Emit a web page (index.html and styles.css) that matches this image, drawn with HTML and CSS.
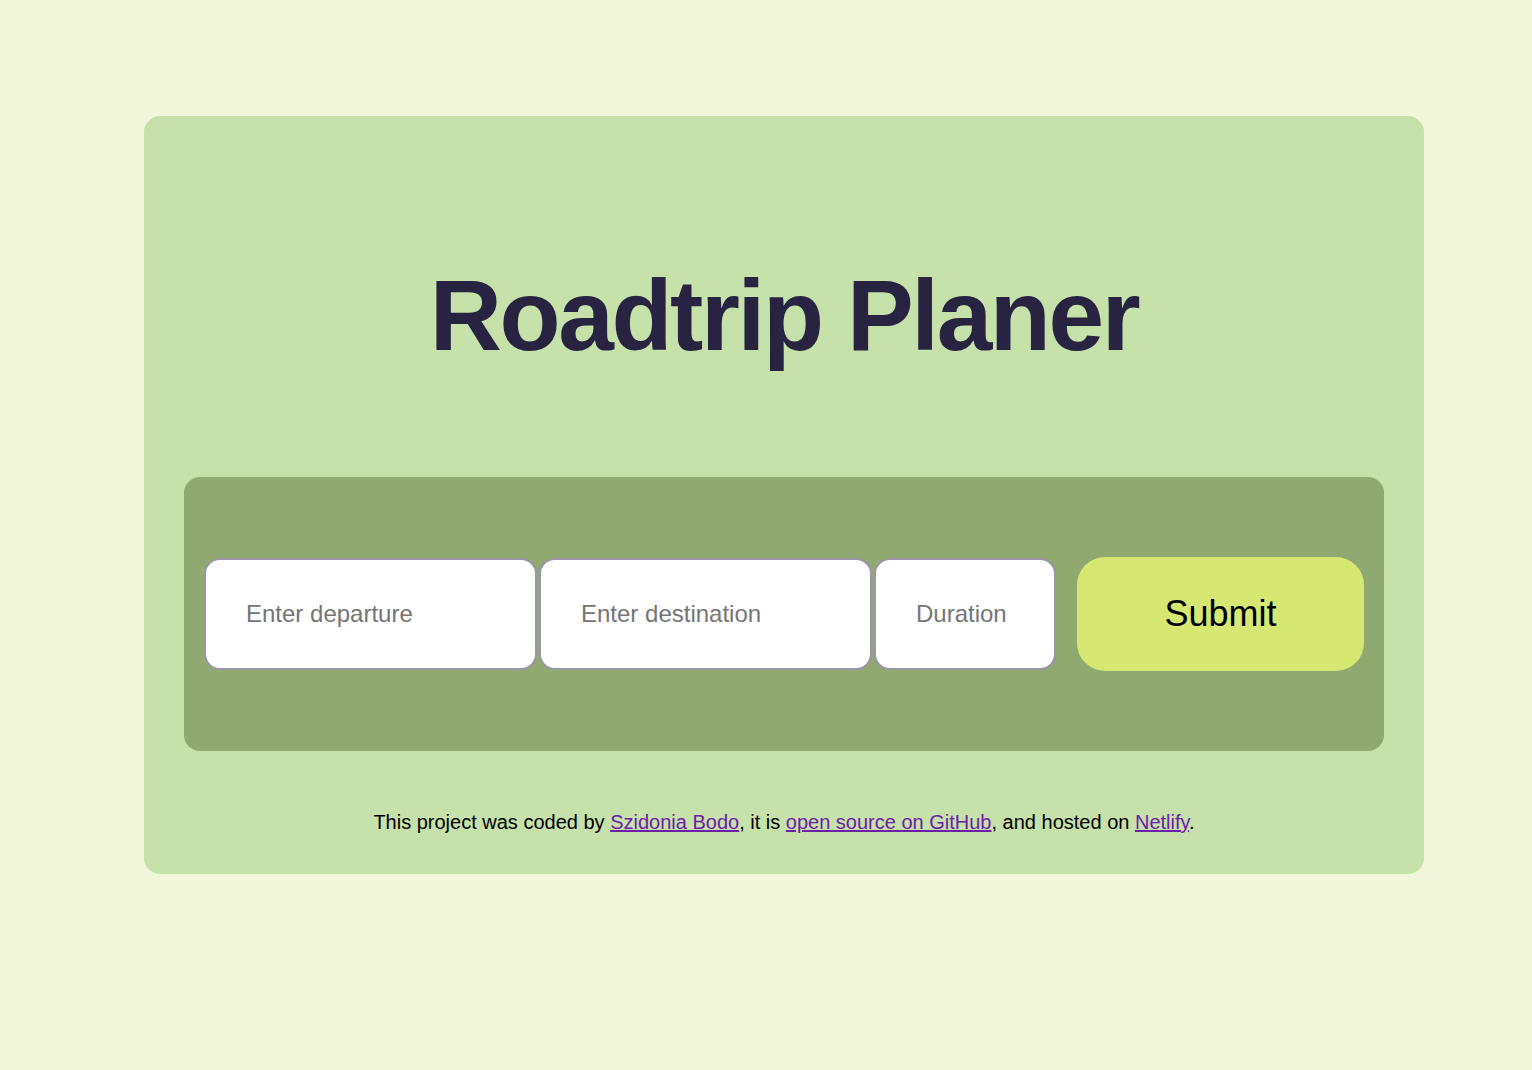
FILE: index.html
```html
<!DOCTYPE html>
<html lang="en">
<head>
<meta charset="utf-8">
<title>Roadtrip Planer</title>
<link rel="stylesheet" href="styles.css">
</head>
<body>
<main class="card">
  <h1 class="title">Roadtrip Planer</h1>
  <form class="panel">
    <input class="field field-wide" type="text" placeholder="Enter departure">
    <input class="field field-wide" type="text" placeholder="Enter destination">
    <input class="field field-short" type="text" placeholder="Duration">
    <button class="submit" type="button">Submit</button>
  </form>
  <footer class="footer">This project was coded by <a href="#">Szidonia Bodo</a>, it is <a href="#">open source on GitHub</a>, and hosted on <a href="#">Netlify</a>.</footer>
</main>
</body>
</html>
```
FILE: styles.css
```css
html, body {
  margin: 0;
  padding: 0;
}
body {
  background: #f1f5d9;
  font-family: "Liberation Sans", Arial, sans-serif;
}
.card {
  width: 1280px;
  box-sizing: border-box;
  margin: 116px 0 0 144px;
  padding: 40px;
  background: #c6e1aa;
  border-radius: 16px;
}
.title {
  margin: 99px 0 102px;
  font-size: 100px;
  line-height: 120px;
  font-weight: 700;
  letter-spacing: -2.4px;
  text-align: center;
  color: #272340;
}
.panel {
  display: flex;
  align-items: center;
  gap: 2px;
  padding: 80px 20px 80px;
  background: #8fa970;
  border-radius: 16px;
}
.field {
  box-sizing: border-box;
  flex: none;
  height: 112px;
  margin: 0;
  padding: 0 0 0 40px;
  border: 2px solid #9a96a8;
  border-radius: 16px;
  background: #fff;
  font-family: "Liberation Sans", Arial, sans-serif;
  font-size: 24px;
  color: #222;
  outline: none;
}
.field::placeholder {
  color: #757575;
}
.field-wide {
  width: 333px;
}
.field-short {
  width: 182px;
}
.submit {
  flex: none;
  margin: 0 0 0 19px;
  width: 287px;
  height: 114px;
  border: none;
  border-radius: 28px;
  background: #d6e872;
  font-family: "Liberation Sans", Arial, sans-serif;
  font-size: 36px;
  color: #000;
  cursor: pointer;
}
.footer {
  margin-top: 60px;
  font-size: 20px;
  line-height: 23px;
  text-align: center;
  color: #000;
}
.footer a {
  color: #6c20a8;
}
```
